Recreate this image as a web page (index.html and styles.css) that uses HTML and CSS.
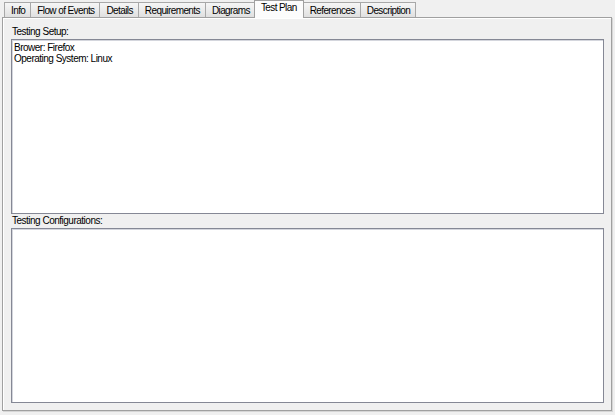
FILE: index.html
```html
<!DOCTYPE html>
<html lang="en">
<head>
    <meta charset="UTF-8">
    <title>Test Plan</title>
    <link rel="stylesheet" href="styles.css">
</head>
<body>
<div class="window">
    <div class="tabs">
        <div class="tab">Info</div>
        <div class="tab">Flow of Events</div>
        <div class="tab">Details</div>
        <div class="tab">Requirements</div>
        <div class="tab">Diagrams</div>
        <div class="tab active">Test Plan</div>
        <div class="tab">References</div>
        <div class="tab">Description</div>
    </div>
    <div class="panel">
        <label class="field-label">Testing Setup:</label>
        <div class="box">Brower: Firefox<br>Operating System: Linux</div>
        <label class="field-label second">Testing Configurations:</label>
        <div class="box"></div>
    </div>
</div>
</body>
</html>
```

FILE: styles.css
```css
body {
    margin: 0;
    background-color: #f0f0f0;
    font-family: "Liberation Sans", Arial, sans-serif;
    font-size: 10px;
    letter-spacing: -0.5px;
    color: #000;
}

.window {
    width: 615px;
    height: 415px;
    padding: 0 2px;
    box-sizing: border-box;
    display: flex;
    flex-direction: column;
}

.tabs {
    display: flex;
    height: 17px;
    padding-left: 2px;
    align-items: flex-end;
    letter-spacing: -0.6px;
}

.tab {
    height: 14px;
    line-height: 15px;
    padding: 0 5px 0 6px;
    margin-right: -1px;
    border: 1px solid #a8a8a8;
    border-bottom: none;
    background: linear-gradient(#f6f6f6, #e0e0e0);
}

.tab.active {
    height: 17px;
    line-height: 14px;
    padding: 0 6px;
    margin: 0 0 -1px -1px;
    background: #fcfcfc;
    position: relative;
    z-index: 1;
    border-color: #a0a0a0;
}

.tab.active + .tab {
    margin-left: -1px;
}

.panel {
    width: 610px;
    height: 394px;
    box-sizing: border-box;
    border: 1px solid #a0a0a0;
    box-shadow: inset 1px 1px 0 #ffffff, 1px 1px 0 #d6d6d6;
    background-color: #f0f0f0;
    padding: 8px 7px 7px 8px;
    display: flex;
    flex-direction: column;
}

.field-label {
    display: block;
    height: 12px;
    line-height: 12px;
    margin-bottom: 1px;
    padding-left: 1px;
}

.field-label.second {
    margin-top: 1px;
}

.box {
    height: 175px;
    box-sizing: border-box;
    background: #ffffff;
    border: 1px solid #858895;
    box-shadow: inset 1px 1px 0 #d4d6dd;
    padding: 2px 2px;
    line-height: 11px;
}
```
